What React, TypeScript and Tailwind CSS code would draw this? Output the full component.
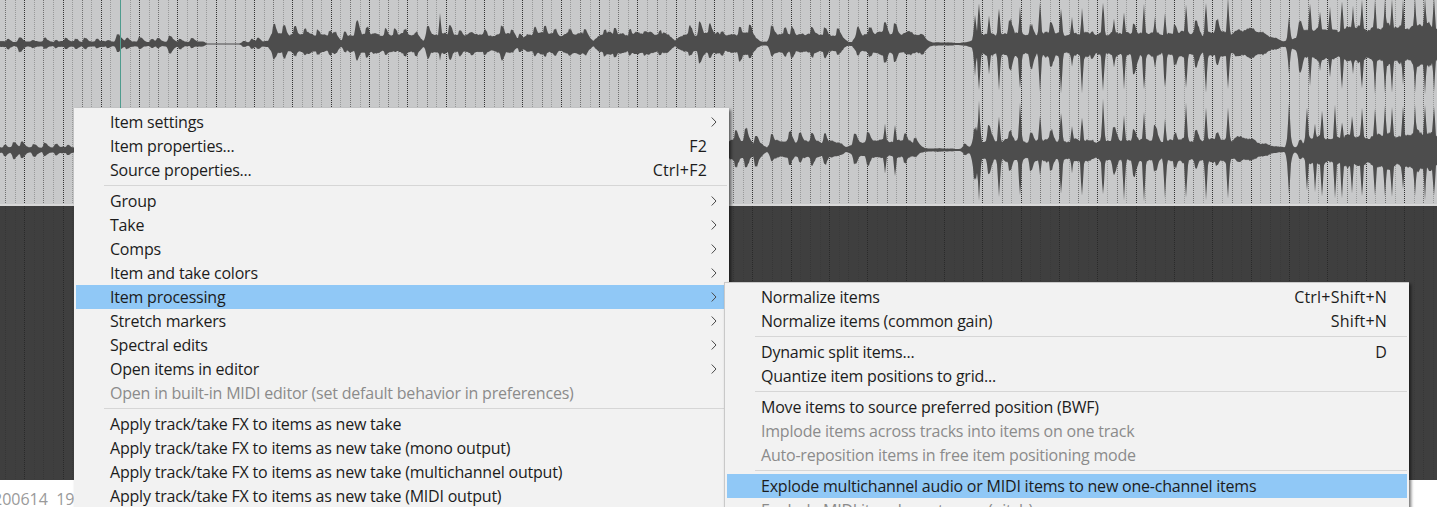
import React from "react";

type P = [number, number, number];
const ch1: P[] = [
  [8,5,5],[20,7,8],[33,4,4],[45,6,5],[56,4,4],[66,6,5],[76,5,5],[85,6,5],[97,5,4],[108,4,4],[118,10,8],[127,6,5],[140,7,5],[152,5,4],[158,6,4],[170,8,9],[180,5,5],[192,6,4],
  [244,3,3],[252,5,5],[258,6,5],[274,19,15],[284,18,14],[295,17,12],[305,15,11],[318,14,11],[330,13,11],[345,12,8],[357,23,16],[367,17,13],[386,15,11],[395,15,8],[405,15,12],[416,12,12],[428,17,14],[440,29,17],[450,18,15],[460,14,12],[472,12,11],
  [485,14,11],[502,18,16],[512,14,8],[520,10,8],[535,17,12],[545,17,12],[555,15,12],[570,15,12],[585,14,11],[605,14,12],[615,15,14],[630,14,11],[645,13,11],[660,13,11],[690,18,12],[700,21,19],[710,20,14],[722,13,11],[740,17,17],[750,18,14],[772,18,12],[785,16,12],[792,17,14],[812,17,13],[825,17,14],[838,16,11],[858,17,11],[870,17,13],[885,21,18],[895,20,17],[910,11,11],[922,10,11],
  [979,44,48],[975,30,30],[989,28,30],[999,38,46],[1010,24,25],[1020,37,48],[1031,19,24],[1040,42,47],[1051,21,23],[1061,37,48],[1072,27,22],[1082,34,47],[1092,12,15],[1103,44,48],[1114,26,24],[1124,32,45],[1134,20,30],[1144,38,48],[1155,26,25],[1165,31,47],[1175,19,21],[1186,41,47],[1196,24,23],[1206,42,47],[1217,25,20],[1228,44,47],[1289,26,28],[1300,24,27],
  [1310,44,40],[1320,34,28],[1330,38,35],[1342,44,48],[1353,36,30],[1362,44,48],[1375,44,48],[1385,44,48],[1392,44,48],[1403,44,40],[1415,44,47],[1425,44,47],[1434,44,47],
];
const ch2: P[] = [
  [5,5,6],[14,8,9],[22,8,8],[34,6,7],[45,7,6],[56,6,5],[68,5,5],
  [736,20,17],[746,22,18],[756,14,16],[772,15,11],[790,18,14],[800,17,12],[812,17,15],[825,16,14],[855,17,14],[868,18,15],[885,26,22],[895,27,25],[905,16,13],[915,12,7],
  [965,6,5],[975,22,28],[979,47,48],[989,24,23],[999,35,48],[1010,20,20],[1020,44,48],[1031,18,20],[1040,36,26],[1051,20,20],[1061,40,47],[1072,26,22],[1082,33,47],[1092,10,9],[1103,48,48],[1114,24,24],[1124,33,47],[1134,21,26],[1144,37,48],[1155,24,22],[1165,30,47],[1175,17,18],[1186,44,48],[1196,20,18],[1206,40,48],[1217,18,16],[1228,43,47],[1289,44,45],[1300,10,9],
  [1307,44,40],[1315,26,40],[1322,40,46],[1335,44,46],[1342,30,48],[1352,36,42],[1362,44,48],[1375,44,48],[1385,44,48],[1392,44,48],[1403,44,40],[1415,44,47],[1425,44,47],[1434,44,47],
];
const floor1: number[][] = [
  [0,3,3],[204,2.5,2.5],[207,0.5,0.5],[240,0.5,0.5],[246,2,2],[268,3,3],[272,11,9],[336,11,9],[341,4,3],[350,10,9],[417,10,9],[423,3,3],[428,10,9],
  [510,11,9],[514,7,5],[522,7,5],[528,11,9],[588,11,10],[593,3,2],[600,11,10],[668,12,10],[675,3,2],[684,11,9],[748,11,10],[755,3,2],[768,3,2],[773,11,9],[840,11,9],[846,2,2],[852,2,2],[857,11,9],
  [905,13,11],[922,9,9],[932,2,2],[958,1.2,1.2],[966,2,2],[985,11,12],[1230,12,12],[1240,17,14],[1262,13,12],[1272,9,8],[1282,3,3],[1292,4,4],[1305,15,15],[1437,21,23],
];
const floor2: number[][] = [[0,3,3],[74,3,3],[730,11,10],[760,8,6],[767,3,2],[772,10,8],[835,10,8],[846,3,2],[858,10,8],[905,11,8],[925,2,2],[958,1.2,1.2],[968,3,3],[985,10,11],[1230,11,12],[1236,15,12],[1258,9,9],[1280,3,2],[1295,3,3],[1310,13,14],[1437,19,22]];

function interp(t: number[][], x: number, k: 1 | 2) {
  for (let i = 1; i < t.length; i++) {
    if (x <= t[i][0]) {
      const a = t[i - 1], b = t[i];
      return a[k] + ((b[k] - a[k]) * (x - a[0])) / (b[0] - a[0]);
    }
  }
  return t[t.length - 1][k];
}

function rnd(x: number) {
  const v = Math.sin(x * 12.9898) * 43758.5453;
  return v - Math.floor(v);
}

function wavePath(peaks: P[], floor: number[][], cy: number) {
  const tops: string[] = [];
  const bots: string[] = [];
  for (let x = 0; x <= 1437; x++) {
    const wob = 0.9 + 0.18 * Math.sin(x / 3.1) * Math.sin(x / 7.3 + cy);
    let up = interp(floor, x, 1) * wob;
    let dn = interp(floor, x, 2) * wob;
    for (const [px, a, b] of peaks) {
      const d = x - px;
      const ad = Math.max(0, Math.abs(d) - (a > 25 ? 0.5 : 1));
      let s: number;
      if (a > 25) {
        s = 0.76 * Math.exp(-ad / 1.0) + 0.24 * (d < 0 ? Math.exp(-ad / 2) : Math.exp(-ad / 3.2));
      } else {
        s = d < 0 ? Math.exp(-ad / 2) : Math.exp(-ad / 5);
      }
      up = Math.max(up, a * s);
      dn = Math.max(dn, b * s);
    }
    const n = 0.92 + 0.16 * rnd(x + cy);
    tops.push(`${x},${(cy - up * n).toFixed(1)}`);
    bots.unshift(`${x},${(cy + dn * (0.92 + 0.16 * rnd(x * 1.7 + cy))).toFixed(1)}`);
  }
  return `M${tops.join("L")}L${bots.join("L")}Z`;
}

function Grid({ height, minor, major, strong }: { height: number; minor: string; major: string; strong: string }) {
  const lines: React.ReactNode[] = [];
  for (let i = -13; i < 140; i++) {
    const x = Math.round(120 + i * 9.583) + 0.5;
    const c = ((i % 4) + 4) % 4 === 2 ? strong : i % 2 === 0 ? major : minor;
    lines.push(<line key={i} x1={x} x2={x} y1={0} y2={height} stroke={c} strokeWidth={1} strokeDasharray="1 1" />);
  }
  return <>{lines}</>;
}

function Chevron() {
  return (
    <svg width="6" height="10" viewBox="0 0 6 10" className="block">
      <path d="M0.7 0.5 L5 5 L0.7 9.5" fill="none" stroke="#4a4a4a" strokeWidth="1" />
    </svg>
  );
}

type Item =
  | { sep: true }
  | { label: string; key2?: string; sub?: boolean; off?: boolean; hi?: boolean };

const menu1: Item[] = [
  { label: "Item settings", sub: true },
  { label: "Item properties...", key2: "F2" },
  { label: "Source properties...", key2: "Ctrl+F2" },
  { sep: true },
  { label: "Group", sub: true },
  { label: "Take", sub: true },
  { label: "Comps", sub: true },
  { label: "Item and take colors", sub: true },
  { label: "Item processing", sub: true, hi: true },
  { label: "Stretch markers", sub: true },
  { label: "Spectral edits", sub: true },
  { label: "Open items in editor", sub: true },
  { label: "Open in built-in MIDI editor (set default behavior in preferences)", off: true },
  { sep: true },
  { label: "Apply track/take FX to items as new take" },
  { label: "Apply track/take FX to items as new take (mono output)" },
  { label: "Apply track/take FX to items as new take (multichannel output)" },
  { label: "Apply track/take FX to items as new take (MIDI output)" },
];

const menu2: Item[] = [
  { label: "Normalize items", key2: "Ctrl+Shift+N" },
  { label: "Normalize items (common gain)", key2: "Shift+N" },
  { sep: true },
  { label: "Dynamic split items...", key2: "D" },
  { label: "Quantize item positions to grid..." },
  { sep: true },
  { label: "Move items to source preferred position (BWF)" },
  { label: "Implode items across tracks into items on one track", off: true },
  { label: "Auto-reposition items in free item positioning mode", off: true },
  { sep: true },
  { label: "Explode multichannel audio or MIDI items to new one-channel items", hi: true },
  { label: "Explode MIDI item by note row (pitch)", off: true },
];

function Rows({ items }: { items: Item[] }) {
  return (
    <>
      {items.map((it, i) =>
        "sep" in it ? (
          <div key={i} className="h-[7px] pl-[30px] pr-[2px] pt-[3px]">
            <div className="h-px bg-[#d6d6d6]" />
          </div>
        ) : (
          <div
            key={i}
            className={`mx-[2px] flex h-6 items-center pl-[34px] pr-[20px] ${it.hi ? "bg-[#90c8f6]" : ""} ${it.off ? "text-[#8b8b8b]" : "text-[#1c1c1c]"}`}
          >
            <span className="flex-1 whitespace-nowrap">{it.label}</span>
            {it.key2 && <span className="whitespace-nowrap tracking-[0.2px]">{it.key2}</span>}
            {it.sub && (
              <span className="-mr-[10px]">
                <Chevron />
              </span>
            )}
          </div>
        )
      )}
    </>
  );
}

export default function App() {
  const d1 = wavePath(ch1, floor1, 44);
  const d2 = wavePath(ch2, floor2, 150);
  return (
    <div className="relative flex h-[507px] w-[1437px] flex-col overflow-hidden bg-white font-['Open_Sans','Liberation_Sans',sans-serif] text-[16px] tracking-[-0.21px]">
      <svg width="1437" height="204" className="block shrink-0 bg-[#c8c9ca]">
        <Grid height={204} minor="#989999" major="#707070" strong="#333333" />
        <path d={d1} fill="#4d4d4d" />
        <path d={d2} fill="#4d4d4d" />
        <line x1="120.5" x2="120.5" y1="0" y2="204" stroke="#4f9c8e" />
      </svg>
      <div className="h-[2px] shrink-0 bg-[#d8d8d8]" />
      <svg width="1437" height="274" className="block shrink-0 bg-[#3f3f3f]">
        <Grid height={274} minor="#3a3a3a" major="#363636" strong="#2a2a2a" />
      </svg>
      <div className="-ml-[7px] h-[27px] whitespace-pre pt-[7px] leading-[24px] tracking-normal text-[#9a9a9a]">200614  19</div>

      <div className="absolute left-[74px] top-[108px] h-[420px] w-[655px] bg-[#f2f2f2] pt-[2px] shadow-[2px_2px_3px_rgba(0,0,0,0.55)]">
        <Rows items={menu1} />
      </div>
      <div className="absolute left-[724px] top-[282px] h-[260px] w-[685px] border-l border-t border-[#c9c9c9] bg-[#f2f2f2] pt-[2px] shadow-[2px_2px_3px_rgba(0,0,0,0.55)]">
        <Rows items={menu2} />
      </div>
    </div>
  );
}
